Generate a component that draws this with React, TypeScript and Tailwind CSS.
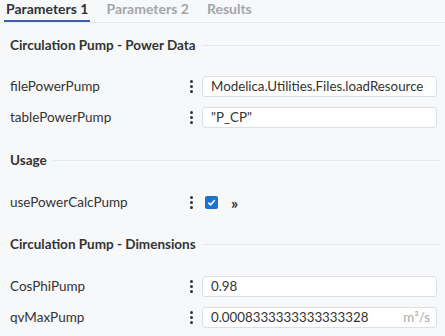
import React from "react";

const Dots = () => (
  <div className="flex w-[20px] shrink-0 flex-col items-center justify-center gap-[2px]">
    <span className="h-[3px] w-[3px] rounded-full bg-[#333]" />
    <span className="h-[3px] w-[3px] rounded-full bg-[#333]" />
    <span className="h-[3px] w-[3px] rounded-full bg-[#333]" />
  </div>
);

const Section = ({ title }: { title: string }) => (
  <div className="flex h-[19px] items-center gap-[6px] pl-[10px] pr-[5px]">
    <span className="text-[13.5px] leading-[19px] font-bold text-[#333] whitespace-nowrap">{title}</span>
    <div className="h-px flex-1 bg-[#e6e8eb]" />
  </div>
);

const Row = ({ label, value, unit }: { label: string; value: string; unit?: string }) => (
  <div className="flex h-[21px] items-center">
    <div className="w-[181px] pl-[10px] text-[13.5px] leading-[19px] text-[#333]">{label}</div>
    <Dots />
    <div className="ml-[1px] flex h-[21px] w-[235px] items-center justify-between overflow-hidden rounded-[3px] border border-[#dcdfe3] bg-white pl-[8px] pr-[6px] text-[13.3px] leading-[19px] text-[#333] whitespace-nowrap">
      <span>{value}</span>
      {unit && <span className="text-[#aaa]">{unit}</span>}
    </div>
  </div>
);

export default function App() {
  return (
    <div
      className="h-[336px] w-[445px] overflow-hidden bg-[#f7f8fa]"
      style={{ fontFamily: "Lato, 'Open Sans', sans-serif" }}
    >
      <div className="flex h-[23px] items-end gap-[14px] border-b border-[#e6e8eb] pl-[4px] text-[14px] font-bold">
        <div className="border-b-[2px] border-[#3d5ea8] px-[2px] pb-[3px] leading-[17px] text-[#333]">Parameters 1</div>
        <div className="px-[2px] pb-[5px] leading-[17px] text-[#a3a6aa]">Parameters 2</div>
        <div className="px-[2px] pb-[5px] leading-[17px] text-[#a3a6aa]">Results</div>
      </div>
      <div className="pt-[13px]">
        <Section title="Circulation Pump - Power Data" />
        <div className="mt-[21px] flex flex-col gap-[10px]">
          <Row label="filePowerPump" value="Modelica.Utilities.Files.loadResource" />
          <Row label="tablePowerPump" value={'"P_CP"'} />
        </div>
        <div className="mt-[23px]">
          <Section title="Usage" />
        </div>
        <div className="mt-[22px] flex h-[21px] items-center">
          <div className="w-[181px] pl-[10px] text-[13.5px] leading-[19px] text-[#333]">usePowerCalcPump</div>
          <Dots />
          <div className="ml-[4px] flex h-[13px] w-[13px] items-center justify-center rounded-[2px] bg-[#1a73d0]">
            <svg width="9" height="9" viewBox="0 0 10 10">
              <path d="M1.5 5.2 L4 7.6 L8.6 2.4" fill="none" stroke="white" strokeWidth="1.8" />
            </svg>
          </div>
          <span className="ml-[13px] text-[16px] leading-[19px] font-bold text-[#333]">»</span>
        </div>
        <div className="mt-[22px]">
          <Section title="Circulation Pump - Dimensions" />
        </div>
        <div className="mt-[22px] flex flex-col gap-[10px]">
          <Row label="CosPhiPump" value="0.98" />
          <Row label="qvMaxPump" value="0.0008333333333333328" unit="m³/s" />
        </div>
      </div>
    </div>
  );
}
